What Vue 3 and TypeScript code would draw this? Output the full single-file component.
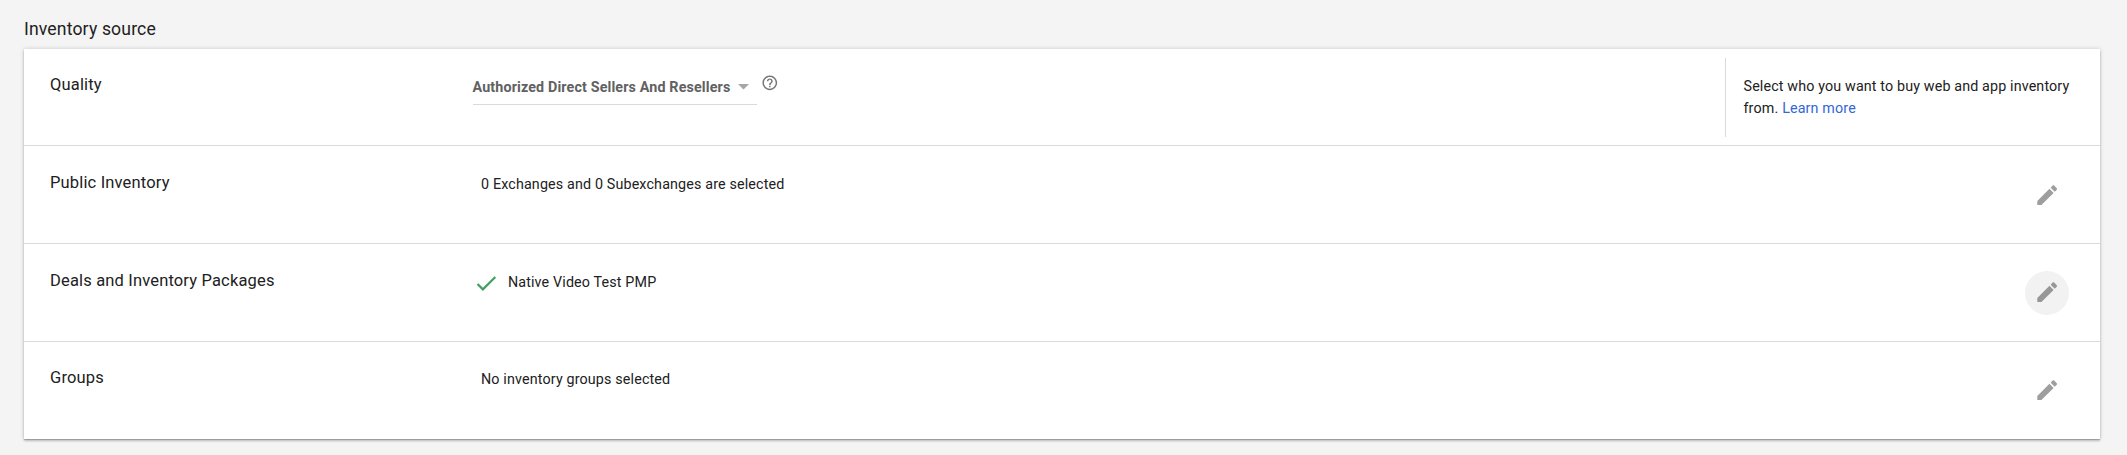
<script setup lang="ts">
interface SourceRow {
  key: string
  label: string
  value: string
  checked?: boolean
  active?: boolean
}

const quality = 'Authorized Direct Sellers And Resellers'

const rows: SourceRow[] = [
  { key: 'public', label: 'Public Inventory', value: '0 Exchanges and 0 Subexchanges are selected' },
  { key: 'deals', label: 'Deals and Inventory Packages', value: 'Native Video Test PMP', checked: true, active: true },
  { key: 'groups', label: 'Groups', value: 'No inventory groups selected' },
]
</script>

<template>
  <main class="page">
    <h2 class="title">Inventory source</h2>
    <section class="card">
      <div class="row quality">
        <div class="label">Quality</div>
        <div class="content">
          <div class="select">
            <span>{{ quality }}</span>
            <svg class="caret" viewBox="0 0 11 6"><path d="M0 0h11L5.5 5.6z" /></svg>
          </div>
          <svg class="help" viewBox="0 0 24 24">
            <path d="M11 18h2v-2h-2v2zm1-16C6.48 2 2 6.48 2 12s4.48 10 10 10 10-4.48 10-10S17.52 2 12 2zm0 18c-4.41 0-8-3.59-8-8s3.59-8 8-8 8 3.59 8 8-3.59 8-8 8zm0-14c-2.21 0-4 1.79-4 4h2c0-1.1.9-2 2-2s2 .9 2 2c0 2-3 1.75-3 5h2c0-2.25 3-2.5 3-5 0-2.21-1.79-4-4-4z" />
          </svg>
        </div>
        <aside class="hint">
          <div>Select who you want to buy web and app inventory</div>
          <div class="hint-end"><span>from.</span><a class="link">Learn more</a></div>
        </aside>
      </div>
      <div v-for="row in rows" :key="row.key" class="row" :class="row.key">
        <div class="label">{{ row.label }}</div>
        <div class="content">
          <svg v-if="row.checked" class="check" viewBox="0 0 24 24">
            <path d="M9 16.17L4.83 12l-1.42 1.41L9 19 21 7l-1.41-1.41z" />
          </svg>
          <span class="value" :class="{ checked: row.checked }">{{ row.value }}</span>
        </div>
        <button class="edit" :class="{ active: row.active }" aria-label="Edit">
          <svg viewBox="0 0 24 24">
            <path d="M3 17.25V21h3.75L17.81 9.94l-3.75-3.75L3 17.25zM20.71 7.04c.39-.39.39-1.02 0-1.41l-2.34-2.34c-.39-.39-1.02-.39-1.41 0l-1.83 1.83 3.75 3.75 1.83-1.83z" />
          </svg>
        </button>
      </div>
    </section>
  </main>
</template>

<style>
body {
  background: #f4f4f4;
}
</style>

<style scoped>
.page {
  box-sizing: border-box;
  height: 455px;
  padding: 17px 27px 0 24px;
  font-family: Roboto, "Liberation Sans", sans-serif;
  font-size: 14.3px;
  letter-spacing: 0.15px;
  line-height: 22px;
  color: #212121;
  overflow: hidden;
}
.title {
  margin: 0 0 8px;
  font-size: 17.6px;
  font-weight: 400;
  letter-spacing: 0.15px;
  line-height: 24px;
}
.card {
  background: #fff;
  box-shadow: 0 2px 2px rgba(0, 0, 0, 0.2), 0 0 4px rgba(0, 0, 0, 0.18), 0 1px 0 rgba(0, 0, 0, 0.15);
}
.row {
  box-sizing: border-box;
  display: flex;
  height: 98px;
  border-bottom: 1px solid #dadada;
}
.quality {
  height: 97px;
}
.groups {
  height: 97px;
  border-bottom: 0;
}
.label {
  box-sizing: border-box;
  width: 448.5px;
  padding: 26px 0 0 26px;
  font-size: 16.5px;
  letter-spacing: 0.16px;
}
.quality .label,
.groups .label {
  padding-top: 25px;
}
.content {
  display: flex;
  flex: 1;
  align-items: flex-start;
}
.select {
  display: flex;
  box-sizing: border-box;
  width: 284px;
  height: 29px;
  margin-top: 27px;
  border-bottom: 1px solid #dadada;
  font-weight: 700;
  letter-spacing: 0.14px;
  color: #616161;
}
.caret {
  width: 11px;
  height: 6px;
  margin: 8px 0 0 8px;
  fill: #a6a6a6;
}
.help {
  width: 17.6px;
  height: 17.6px;
  margin: 25px 0 0 4px;
  fill: #757575;
}
.value {
  margin: 27px 0 0 8.5px;
}
.groups .value {
  margin-top: 26px;
}
.value.checked {
  margin-left: 9px;
}
.check {
  width: 26.4px;
  height: 26.4px;
  margin-top: 26px;
  margin-left: 0;
  fill: #43a062;
}
.hint {
  box-sizing: border-box;
  width: 375px;
  height: 79px;
  margin-top: 9px;
  padding: 17px 0 0 17.5px;
  border-left: 1px solid #dadada;
  letter-spacing: 0.14px;
  white-space: nowrap;
}
.hint-end {
  display: flex;
  gap: 3.8px;
}
.link {
  color: #3367d6;
}
.edit {
  display: flex;
  align-items: center;
  justify-content: center;
  width: 44px;
  height: 44px;
  margin: 27px 31px 0 0;
  padding: 0 0 2px;
  box-sizing: border-box;
  border: 0;
  border-radius: 50%;
  background: transparent;
}
.public .edit {
  margin-top: 28px;
}
.edit.active {
  background: #f2f2f2;
}
.edit svg {
  width: 26.4px;
  height: 26.4px;
  fill: #9e9e9e;
}
.edit.active svg {
  fill: #979797;
}
</style>
